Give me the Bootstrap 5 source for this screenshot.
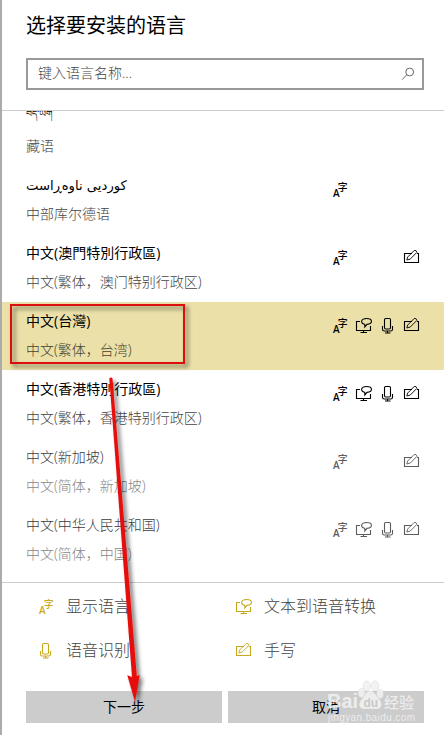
<!DOCTYPE html>
<html lang="zh-CN">
<head>
<meta charset="utf-8">
<meta name="viewport" content="width=device-width, initial-scale=1">
<title>选择要安装的语言</title>
<link rel="stylesheet" href="https://cdn.jsdelivr.net/npm/bootstrap@5.3.0/dist/css/bootstrap.min.css">
<style>
body{font-family:"Open Sans","Noto Sans CJK SC",sans-serif;font-size:14px;font-weight:300;color:#000;background:#fff}
.panel{width:444px;height:735px;border-left:2px solid #ababab}
.head{height:111px;padding:12px 20px 0 24px;border-bottom:1px solid #ccc}
.head h1{font-size:20px;line-height:28px;font-weight:400;margin:0 0 18px}
.search{height:32px;border:2px solid #999;padding:0 7px 0 10px;color:#444;line-height:26px}
.search span{position:relative;top:-1px}
.langs{height:471px;padding-bottom:8px}
.lang{height:68px;padding:6px 23px 0 24px}
.lang p{margin:0;line-height:26px;white-space:nowrap}
.lang p+p{margin-top:3px;color:#444}
.lang.on{background:#ebe0a8}
.lang.on p+p{color:#454230}
.lang.off{color:#3c3c3c}
.lang.off .feats{color:#5c5c5c}
.lang.off p+p{color:#888}
.tw{font-family:"Open Sans","Noto Sans CJK TC",sans-serif;font-weight:400}
.lang .bo{font-family:"Noto Serif Tibetan","Noto Sans Tibetan",sans-serif;font-size:9.3px;font-weight:400}
.lang .ku{font-family:"DejaVu Sans",sans-serif;font-size:13.2px;font-weight:400;line-height:28px;height:26px}
.feats{display:grid;grid-template-columns:repeat(4,18px);column-gap:6px;margin-top:8px}
.ico{width:18px;height:18px;fill:none;stroke:currentColor;stroke-width:1.1;display:block}
.c4{grid-column:4}
.foot{border-top:1px solid #ccc;padding:1px 20px 0 24px;height:153px}
.legend{display:grid;grid-template-columns:198px 1fr;grid-auto-rows:44px;padding-left:11px;font-size:16px;color:#444}
.legend .ico{color:#c9a91c;margin-right:11px}
.acts{gap:6px;margin-top:19px}
.acts .btn{height:32px;border:0;border-radius:0;background:#ccc;color:#000;font-size:14px;line-height:32px;padding:0}
.over{position:absolute;left:0;top:0;pointer-events:none}
</style>
<script src="https://cdn.jsdelivr.net/npm/bootstrap@5.3.0/dist/js/bootstrap.bundle.min.js"></script>
</head>
<body class="position-relative overflow-hidden">
<svg class="d-none">
<symbol id="disp" viewBox="0 0 18 18"><text x="2" y="17" font-family="Open Sans" font-size="11.5" font-weight="600" textLength="6.6" lengthAdjust="spacingAndGlyphs" fill="currentColor" stroke="none">A</text><text x="6.8" y="11.4" font-family="Noto Sans CJK SC" font-size="9.8" font-weight="500" fill="currentColor" stroke="none">字</text></symbol>
<symbol id="tts" viewBox="0 0 18 18"><path d="M5 5.5H1.5V14.5H15.5V10M8.5 14.5V16.5M5.5 16.5H12"/><path d="M8.8 8C5.2 6.8 6 2.5 11.5 2.5C18 2.5 18 8 12 8.4L9.8 11V8.4Z"/></symbol>
<symbol id="mic" viewBox="0 0 18 18"><rect x="5.5" y="2.5" width="6" height="10.5" rx="1.2"/><path d="M3.5 10V13.2Q3.5 15 5.3 15H11.7Q13.5 15 13.5 13.2V10M8.5 15V17M6 17H11.5"/></symbol>
<symbol id="pen" viewBox="0 0 18 18"><path d="M9 5.5H1.5V14.5H15.5V5.5H14"/><path stroke-width=".9" d="M3.8 12L4.7 9L11.2 2.5Q13.3 1.7 13.9 4.4L7.2 11.1Z"/></symbol>
</svg>
<main class="panel d-flex flex-column">
<header class="head">
<h1>选择要安装的语言</h1>
<div class="search d-flex justify-content-between align-items-center"><span>键入语言名称...</span>
<svg width="14" height="14" viewBox="0 0 14 14" fill="none" stroke="#666" stroke-width="1"><circle cx="8.7" cy="5" r="3.9"/><path d="M5.8 7.8L1 12.7"/></svg></div>
</header>
<section class="langs d-flex flex-column justify-content-end overflow-hidden">
<div class="lang flex-shrink-0"><p class="bo">བོད་ཡིག</p><p>藏语</p></div>
<div class="lang flex-shrink-0 d-flex justify-content-between"><div><p class="ku"><bdi>کوردیی ناوەڕاست</bdi></p><p>中部库尔德语</p></div><div class="feats"><svg class="ico"><use href="#disp"/></svg></div></div>
<div class="lang flex-shrink-0 d-flex justify-content-between"><div><p class="tw">中文(澳門特別行政區)</p><p>中文(繁体，澳门特别行政区)</p></div><div class="feats"><svg class="ico"><use href="#disp"/></svg><svg class="ico c4"><use href="#pen"/></svg></div></div>
<div class="lang on flex-shrink-0 d-flex justify-content-between"><div><p class="tw">中文(台灣)</p><p>中文(繁体，台湾)</p></div><div class="feats"><svg class="ico"><use href="#disp"/></svg><svg class="ico"><use href="#tts"/></svg><svg class="ico"><use href="#mic"/></svg><svg class="ico"><use href="#pen"/></svg></div></div>
<div class="lang flex-shrink-0 d-flex justify-content-between"><div><p class="tw">中文(香港特別行政區)</p><p>中文(繁体，香港特别行政区)</p></div><div class="feats"><svg class="ico"><use href="#disp"/></svg><svg class="ico"><use href="#tts"/></svg><svg class="ico"><use href="#mic"/></svg><svg class="ico"><use href="#pen"/></svg></div></div>
<div class="lang off flex-shrink-0 d-flex justify-content-between"><div><p>中文(新加坡)</p><p>中文(简体，新加坡)</p></div><div class="feats"><svg class="ico"><use href="#disp"/></svg><svg class="ico c4"><use href="#pen"/></svg></div></div>
<div class="lang off flex-shrink-0 d-flex justify-content-between"><div><p>中文(中华人民共和国)</p><p>中文(简体，中国)</p></div><div class="feats"><svg class="ico"><use href="#disp"/></svg><svg class="ico"><use href="#tts"/></svg><svg class="ico"><use href="#mic"/></svg><svg class="ico"><use href="#pen"/></svg></div></div>
</section>
<footer class="foot">
<div class="legend">
<div class="d-flex align-items-center"><svg class="ico"><use href="#disp"/></svg>显示语言</div>
<div class="d-flex align-items-center"><svg class="ico"><use href="#tts"/></svg>文本到语音转换</div>
<div class="d-flex align-items-center"><svg class="ico"><use href="#mic"/></svg>语音识别</div>
<div class="d-flex align-items-center"><svg class="ico"><use href="#pen"/></svg>手写</div>
</div>
<div class="acts d-flex"><button class="btn flex-fill w-50">下一步</button><button class="btn flex-fill w-50">取消</button></div>
</footer>
</main>
<svg class="over" width="444" height="735" viewBox="0 0 444 735">
<defs><filter id="sh" x="-30%" y="-10%" width="180%" height="130%"><feDropShadow dx="3" dy="3" stdDeviation="2" flood-color="#000" flood-opacity=".55"/></filter></defs>
<rect x="11" y="305" width="173" height="58" fill="none" stroke="#dc0c0c" stroke-width="2" filter="url(#sh)"/>
<path d="M109.3 378.5Q111 376.5 112.5 378.5L136.8 676L139.7 675L135 702L127.3 675.3L132 677Z" fill="#e60c0c" filter="url(#sh)"/>
<g fill="#f1f1f1" fill-opacity=".9" stroke="#ccc" stroke-opacity=".6" stroke-width=".6">
<ellipse cx="361.5" cy="693" rx="3.5" ry="4.7"/><ellipse cx="366.8" cy="686" rx="3.7" ry="5"/><ellipse cx="375" cy="686" rx="3.7" ry="5"/><ellipse cx="380" cy="694" rx="3.5" ry="4.5"/>
<path d="M370 691C375 691 376 696 380 700C384 706 380 710 375 709H366C360 710 357 705 361 700C365 696 365 691 370 691Z"/>
<g stroke="none">
<text x="327" y="708" font-family="Liberation Sans" font-weight="700" font-size="20" textLength="31" lengthAdjust="spacingAndGlyphs">Bai</text>
<text x="363.5" y="707" font-family="Liberation Sans" font-weight="700" font-size="12" fill="#c4c4c4">du</text>
<text x="384" y="708" font-family="Noto Sans CJK SC" font-weight="500" font-size="15">经验</text>
<text x="328" y="721" font-family="Liberation Sans" font-size="10" textLength="87">jingyan.baidu.com</text>
</g></g>
</svg>
</body>
</html>
